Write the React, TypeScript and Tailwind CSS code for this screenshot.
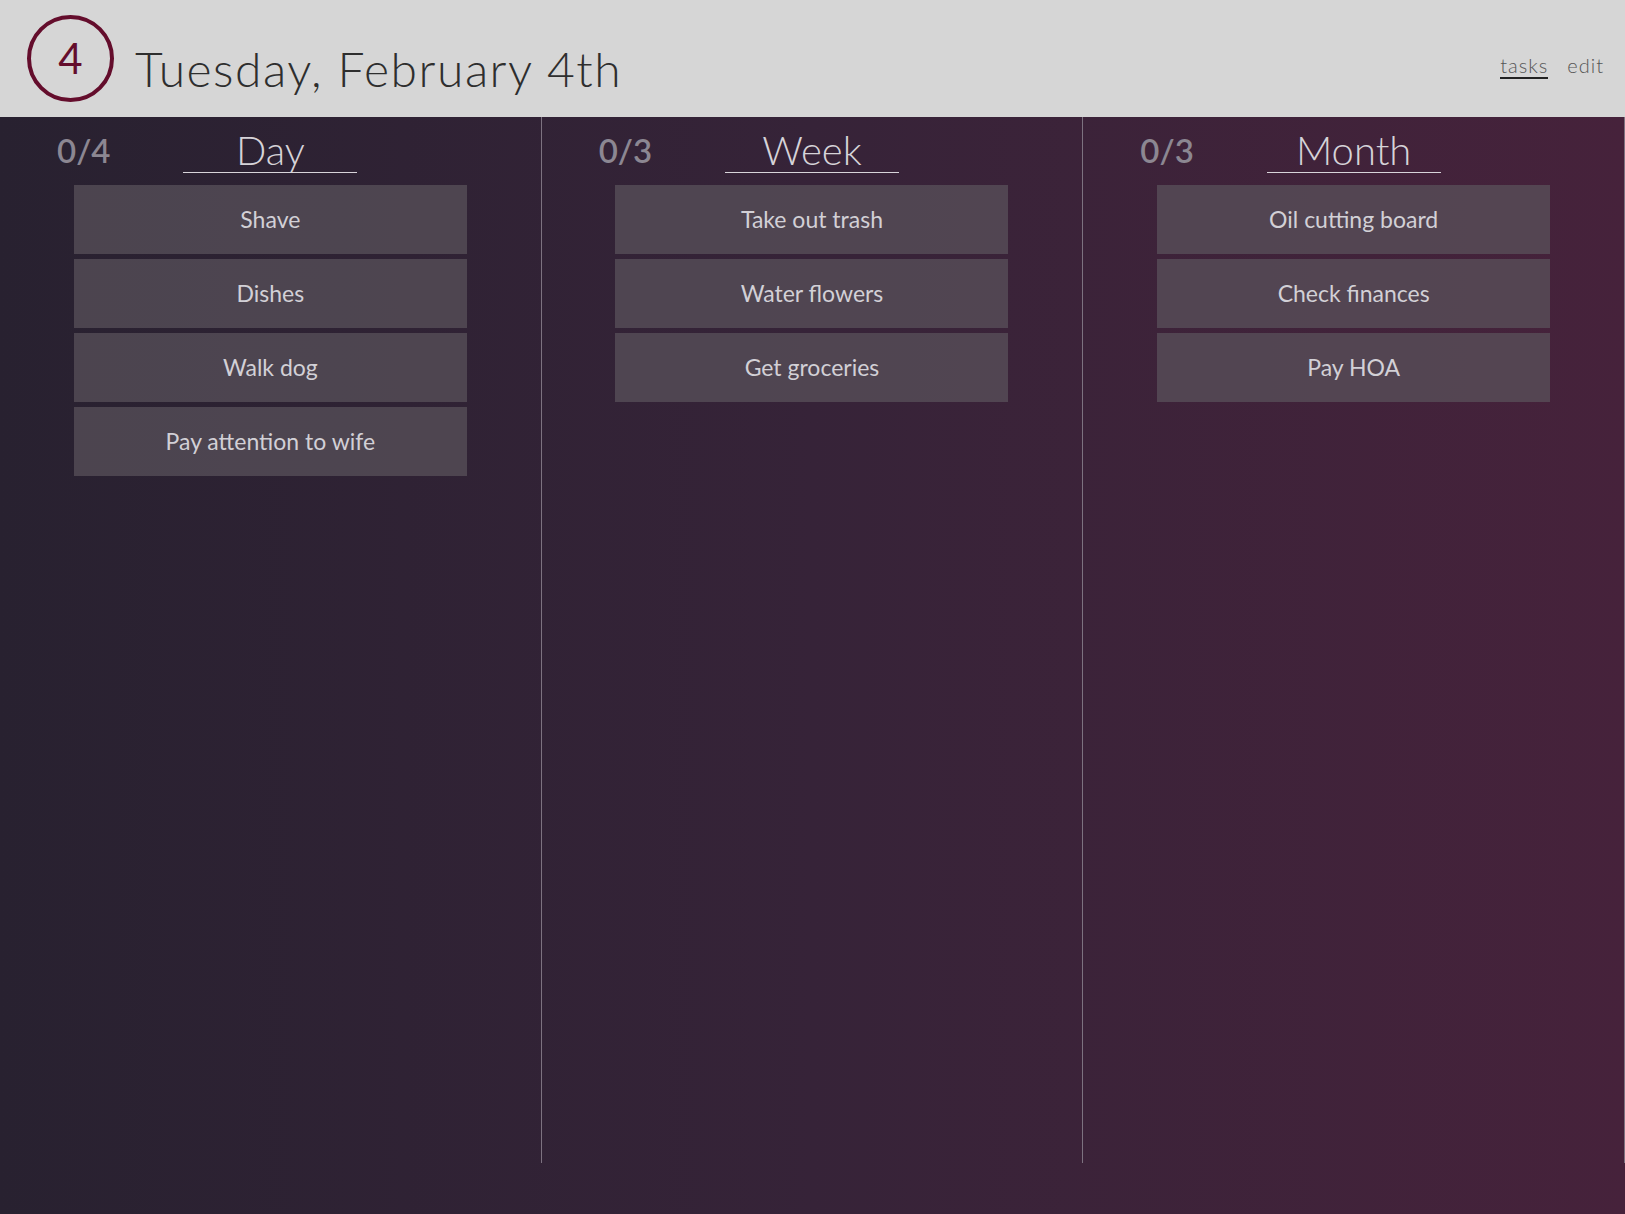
const columns = [
  { title: "Day", tasks: ["Shave", "Dishes", "Walk dog", "Pay attention to wife"] },
  { title: "Week", tasks: ["Take out trash", "Water flowers", "Get groceries"] },
  { title: "Month", tasks: ["Oil cutting board", "Check finances", "Pay HOA"] },
];

function Column({ title, tasks }: { title: string; tasks: string[] }) {
  return (
    <section className="h-[1046px] border-r border-[#7d7280]">
      <div className="grid grid-cols-[1fr_auto_1fr] items-end pt-[11px]">
        <span className="mb-[3px] pl-[57px] text-[33px] font-semibold leading-[40px] text-[#8c8792]">0/{tasks.length}</span>
        <h2 className="w-[174px] border-b border-[#d8d4da] text-center text-[40px] font-light leading-[44px] text-[#d6d3d8]">
          {title}
        </h2>
        <span />
      </div>
      <ul className="mx-auto mt-[12px] flex w-[393px] flex-col gap-[5px]">
        {tasks.map((t) => (
          <li
            key={t}
            className="flex h-[69px] items-center justify-center bg-[#5b545d]/70 text-[23px] text-[#d2d0d6]"
          >
            {t}
          </li>
        ))}
      </ul>
    </section>
  );
}

export default function App() {
  return (
    <div className="min-h-[1214px] bg-linear-to-r from-[#282130] via-[#362338] to-[#46223b] font-['Lato',sans-serif]">
      <header className="flex h-[117px] items-center bg-[#d6d6d6] pl-[27px] pr-[21px]">
        <div className="flex h-[87px] w-[87px] items-center justify-center rounded-full border-[4px] border-[#640d2c] text-[42px] text-[#640d2c]">
          4
        </div>
        <h1 className="ml-[21px] mt-[20px] text-[48px] font-light tracking-[1.5px] text-[#2e2e2e]">
          Tuesday, February 4th
        </h1>
        <nav className="ml-auto mt-[14px] flex gap-[19px] text-[20px] font-light tracking-[1px] text-[#555]">
          <a className="border-b-2 border-[#222] leading-[24px]">tasks</a>
          <a className="leading-[24px]">edit</a>
        </nav>
      </header>
      <main className="grid grid-cols-3">
        {columns.map((c) => (
          <Column key={c.title} title={c.title} tasks={c.tasks} />
        ))}
      </main>
    </div>
  );
}
